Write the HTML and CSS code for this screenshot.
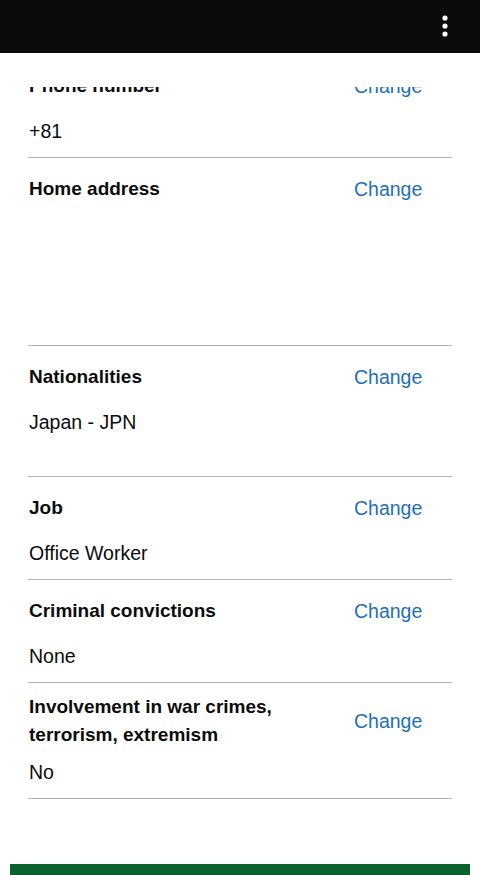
FILE: index.html
```html
<!DOCTYPE html>
<html lang="en">
<head>
    <title>Check your answers</title>
    <link rel="stylesheet" href="styles.css">
</head>
<body>
    <!-- BROWSER BAR -->
    <div class="top-bar">
        <svg class="menu-dots" width="10" height="26" viewBox="0 0 10 26">
            <circle cx="5" cy="5" r="2.6" fill="#fff"/>
            <circle cx="5" cy="13" r="2.6" fill="#fff"/>
            <circle cx="5" cy="21" r="2.6" fill="#fff"/>
        </svg>
    </div>
    <div class="top-gap"></div>
    <section class="scroller">
        <main class="main">
            <dl class="summary">
                <div class="row">
                    <div class="row-head">
                        <dt class="key">Phone number</dt>
                        <dd class="action"><a href="#">Change</a></dd>
                    </div>
                    <dd class="value">+81</dd>
                </div>
                <div class="row">
                    <div class="row-head">
                        <dt class="key">Home address</dt>
                        <dd class="action"><a href="#">Change</a></dd>
                    </div>
                    <dd class="value address">
                        <span class="line"></span>
                        <span class="line"></span>
                        <span class="line"></span>
                        <span class="line"></span>
                    </dd>
                </div>
                <div class="row">
                    <div class="row-head">
                        <dt class="key">Nationalities</dt>
                        <dd class="action"><a href="#">Change</a></dd>
                    </div>
                    <dd class="value">
                        <span class="line">Japan - JPN</span>
                        <span class="line"></span>
                    </dd>
                </div>
                <div class="row">
                    <div class="row-head">
                        <dt class="key">Job</dt>
                        <dd class="action"><a href="#">Change</a></dd>
                    </div>
                    <dd class="value">Office Worker</dd>
                </div>
                <div class="row">
                    <div class="row-head">
                        <dt class="key">Criminal convictions</dt>
                        <dd class="action"><a href="#">Change</a></dd>
                    </div>
                    <dd class="value">None</dd>
                </div>
                <div class="row">
                    <div class="row-head">
                        <dt class="key">Involvement in war crimes, terrorism, extremism</dt>
                        <dd class="action"><a href="#">Change</a></dd>
                    </div>
                    <dd class="value short">No</dd>
                </div>
            </dl>
            <button class="button" type="button">Save and continue</button>
        </main>
    </section>
</body>
</html>
```

FILE: styles.css
```css
body, html { 
    margin: 0;
    padding: 0;
    height: 100%;
    overflow: hidden;
    background: #fff;
    font-family: "Liberation Sans", Arial, sans-serif;
    color: #0b0c0c;
}
.top-bar { 
    height: 53px;
    background: #0b0b0b;
    display: flex;
    justify-content: flex-end;
    align-items: center;
    padding-right: 30px;
}
.menu-dots { 
    display: block;
    margin-top: -1px;
}
.top-gap { 
    height: 34px;
}
.scroller { 
    height: calc(100% - 87px);
    overflow: hidden;
}
.main { 
    padding: 0 10px;
}
.summary { 
    margin: -32px 18px 0 18px;
    padding: 0;
}
.row { 
    border-bottom: 1px solid #b1b4b6;
    padding: 10px 0 12px 0;
}
.row-head { 
    display: flex;
    align-items: center;
}
.key { 
    flex: 1;
    font-weight: bold;
    font-size: 19px;
    line-height: 28px;
    padding-left: 1px;
}
.action { 
    width: 98px;
    margin: 0;
    padding: 7px 0;
    font-size: 19.5px;
    line-height: 28px;
}
.action a { 
    color: #1d70b8;
    text-decoration: none;
}
.value { 
    margin: 10px 0 0 0;
    padding-left: 1px;
    font-size: 19.5px;
    line-height: 28px;
}
.value .line { 
    display: block;
    min-height: 28px;
}
.address { 
    padding-bottom: 1px;
}
.short { 
    margin-top: 9px;
}
.button { 
    display: block;
    width: 100%;
    margin-top: 65px;
    border: 0;
    background: #0c6130;
    color: #fff;
    font-family: "Liberation Sans", Arial, sans-serif;
    font-size: 19px;
    padding: 24px 10px 14px 10px;
}
```
